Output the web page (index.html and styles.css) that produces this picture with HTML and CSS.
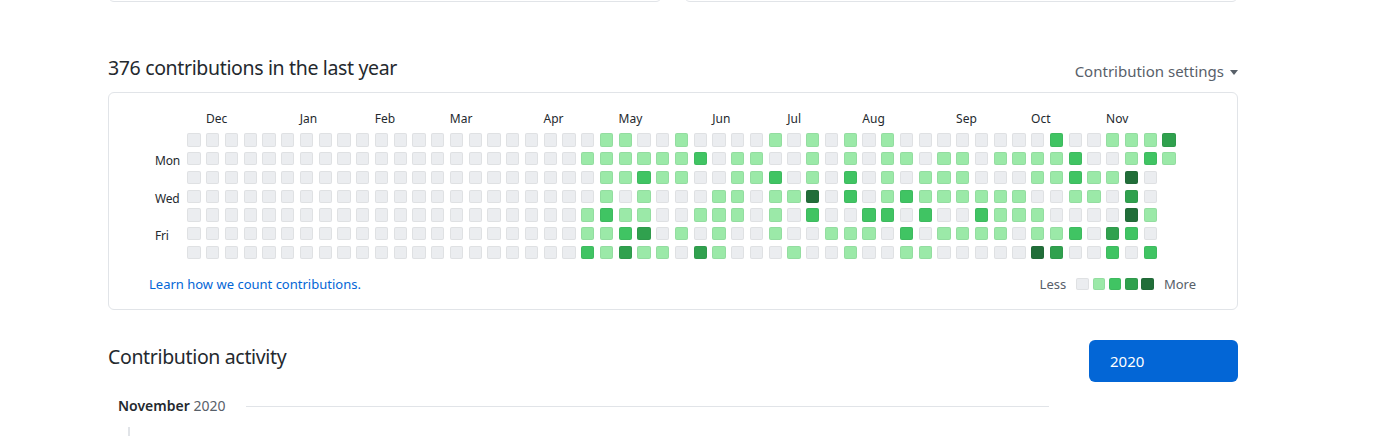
FILE: index.html
```html
<!DOCTYPE html>
<html lang="en">
<head>
<meta charset="utf-8">
<title>Contributions</title>
<link rel="stylesheet" href="styles.css">
</head>
<body>
<div class="page">
  <div class="top-cards">
    <div class="card-stub"></div>
    <div class="card-stub"></div>
  </div>

  <div class="contrib-header">
    <h2 class="contrib-title">376 contributions in the last year</h2>
    <button class="settings" type="button">Contribution settings<span class="caret"></span></button>
  </div>

  <div class="calendar">
    <div class="months" id="months"></div>
    <div class="graph-body">
      <div class="day-labels">
        <span></span><span>Mon</span><span></span><span>Wed</span><span></span><span>Fri</span><span></span>
      </div>
      <div class="weeks" id="weeks"></div>
    </div>
    <div class="calendar-footer">
      <a class="learn" href="#">Learn how we count contributions.</a>
      <div class="legend">
        <span class="legend-text">Less</span>
        <span class="swatches">
          <span class="swatch l0"></span><span class="swatch l1"></span><span class="swatch l2"></span><span class="swatch l3"></span><span class="swatch l4"></span>
        </span>
        <span class="legend-text">More</span>
      </div>
    </div>
  </div>

  <div class="activity">
    <div class="activity-main">
      <h2 class="activity-title">Contribution activity</h2>
      <div class="month-heading">
        <h3 class="month-name"><span class="m">November</span> <span class="y">2020</span></h3>
        <span class="rule"></span>
      </div>
      <div class="timeline"></div>
    </div>
    <aside class="years">
      <a class="year selected" href="#">2020</a>
    </aside>
  </div>
</div>
<script src="app.js"></script>
</body>
</html>
```

FILE: styles.css
```css
* { box-sizing: border-box; }

body {
  margin: 0;
  background: #fff;
  color: #24292e;
  font-family: "Noto Sans", "Open Sans", sans-serif;
  overflow: hidden;
}

.page {
  width: 1130px;
  margin-left: 108px;
}

.top-cards {
  display: flex;
  gap: 22px;
  height: 2px;
  overflow: hidden;
  align-items: flex-end;
}
.card-stub {
  flex: 1;
  height: 20px;
  border: 1px solid #e1e4e8;
  border-radius: 6px;
}

.contrib-header {
  display: flex;
  justify-content: space-between;
  align-items: flex-start;
  height: 26px;
  margin-top: 53px;
  margin-bottom: 11px;
}
.contrib-title {
  margin: 0;
  font-size: 19.5px;
  letter-spacing: -0.35px;
  font-weight: 400;
  line-height: 26px;
  color: #24292e;
}
.settings {
  margin: 6px 0 0;
  padding: 0;
  border: 0;
  background: none;
  font: inherit;
  font-size: 15px;
  line-height: 20px;
  color: #586069;
  display: flex;
  align-items: center;
  gap: 6px;
}
.caret {
  width: 0;
  height: 0;
  border-left: 4.5px solid transparent;
  border-right: 4.5px solid transparent;
  border-top: 5px solid #586069;
  margin-top: 2px;
}

.calendar {
  height: 218px;
  border: 1px solid #e1e4e8;
  border-radius: 6px;
  padding: 18px 41px 0 40px;
}

.months {
  display: grid;
  grid-template-columns: repeat(53, 13.4px);
  column-gap: 5.36px;
  height: 15px;
  margin-left: 38.3px;
  margin-bottom: 7.3px;
  font-size: 12px;
  line-height: 15px;
  color: #24292e;
}
.months span {
  grid-row: 1;
  white-space: nowrap;
}

.graph-body {
  display: flex;
}
.day-labels {
  width: 38.3px;
  padding-left: 6px;
  display: grid;
  grid-template-rows: repeat(7, 13.4px);
  row-gap: 5.36px;
  font-size: 12px;
  letter-spacing: -0.2px;
  color: #24292e;
}
.day-labels span {
  line-height: 15px;
  padding-top: 1px;
}

.weeks {
  display: grid;
  grid-auto-flow: column;
  grid-template-rows: repeat(7, 13.4px);
  grid-auto-columns: 13.4px;
  gap: 5.36px;
}

.day, .swatch {
  border-radius: 2px;
  box-shadow: inset 0 0 0 1px rgba(27, 31, 35, 0.06);
}
.l0 { background: #ebedf0; }
.l1 { background: #9be9a8; }
.l2 { background: #40c463; }
.l3 { background: #30a14e; }
.l4 { background: #216e39; }

.calendar-footer {
  display: flex;
  justify-content: space-between;
  align-items: center;
  margin-top: 15.7px;
  height: 18px;
}
.learn {
  font-size: 13px;
  line-height: 18px;
  color: #0366d6;
  text-decoration: none;
}
.legend {
  display: flex;
  align-items: center;
  gap: 10px;
  font-size: 13px;
  line-height: 18px;
  color: #586069;
}
.swatches {
  display: flex;
  gap: 3.8px;
}
.swatch {
  width: 12.5px;
  height: 12.5px;
}

.activity {
  display: flex;
  margin-top: 30px;
}
.activity-main {
  flex: 1;
  padding-top: 3.5px;
}
.activity-title {
  margin: 0;
  font-size: 19.5px;
  letter-spacing: -0.35px;
  font-weight: 400;
  line-height: 25px;
  color: #24292e;
}
.month-heading {
  display: flex;
  align-items: center;
  gap: 21px;
  margin-top: 27.5px;
  padding-left: 10px;
  height: 20px;
}
.month-name {
  margin: 0;
  font-size: 14px;
  line-height: 20px;
  font-weight: 400;
  white-space: nowrap;
}
.month-name .m {
  font-weight: 600;
  color: #24292e;
}
.month-name .y {
  color: #586069;
}
.rule {
  flex: 1;
  height: 1px;
  background: #e1e4e8;
}
.timeline {
  margin-top: 11px;
  margin-left: 20px;
  width: 2px;
  height: 9px;
  background: #e1e4e8;
}

.years {
  width: 149px;
  margin-left: 40px;
}
.year {
  display: block;
  height: 42px;
  padding-left: 21px;
  border-radius: 6px;
  background: #0366d6;
  color: #fff;
  font-size: 15px;
  line-height: 42px;
  text-decoration: none;
}
```

FILE: app.js
```js
(function () {
  var empty = "0000000";
  var data = [];
  for (var i = 0; i < 21; i++) data.push(empty);
  data = data.concat([
    "0100112", "1111211", "1110123", "0121131", "0110001", "1110010",
    "0200103", "0001111", "0111100", "0110000", "1021110", "0001001",
    "1114200", "0000010", "1122011", "0000210", "1111200", "0102021",
    "0011201", "0111010", "0111010", "0001210", "0101110", "0101100",
    "0110114", "2110013", "0221020", "0011000", "1010032", "1143420",
    "1200102", "31"
  ]);

  var weeks = document.getElementById("weeks");
  data.forEach(function (col) {
    for (var k = 0; k < col.length; k++) {
      var d = document.createElement("span");
      d.className = "day l" + col.charAt(k);
      weeks.appendChild(d);
    }
  });

  var months = [
    ["Dec", 1], ["Jan", 6], ["Feb", 10], ["Mar", 14], ["Apr", 19], ["May", 23],
    ["Jun", 28], ["Jul", 32], ["Aug", 36], ["Sep", 41], ["Oct", 45], ["Nov", 49]
  ];
  var monthRow = document.getElementById("months");
  months.forEach(function (m) {
    var s = document.createElement("span");
    s.textContent = m[0];
    s.style.gridColumn = (m[1] + 1) + " / span 3";
    monthRow.appendChild(s);
  });
})();
```
